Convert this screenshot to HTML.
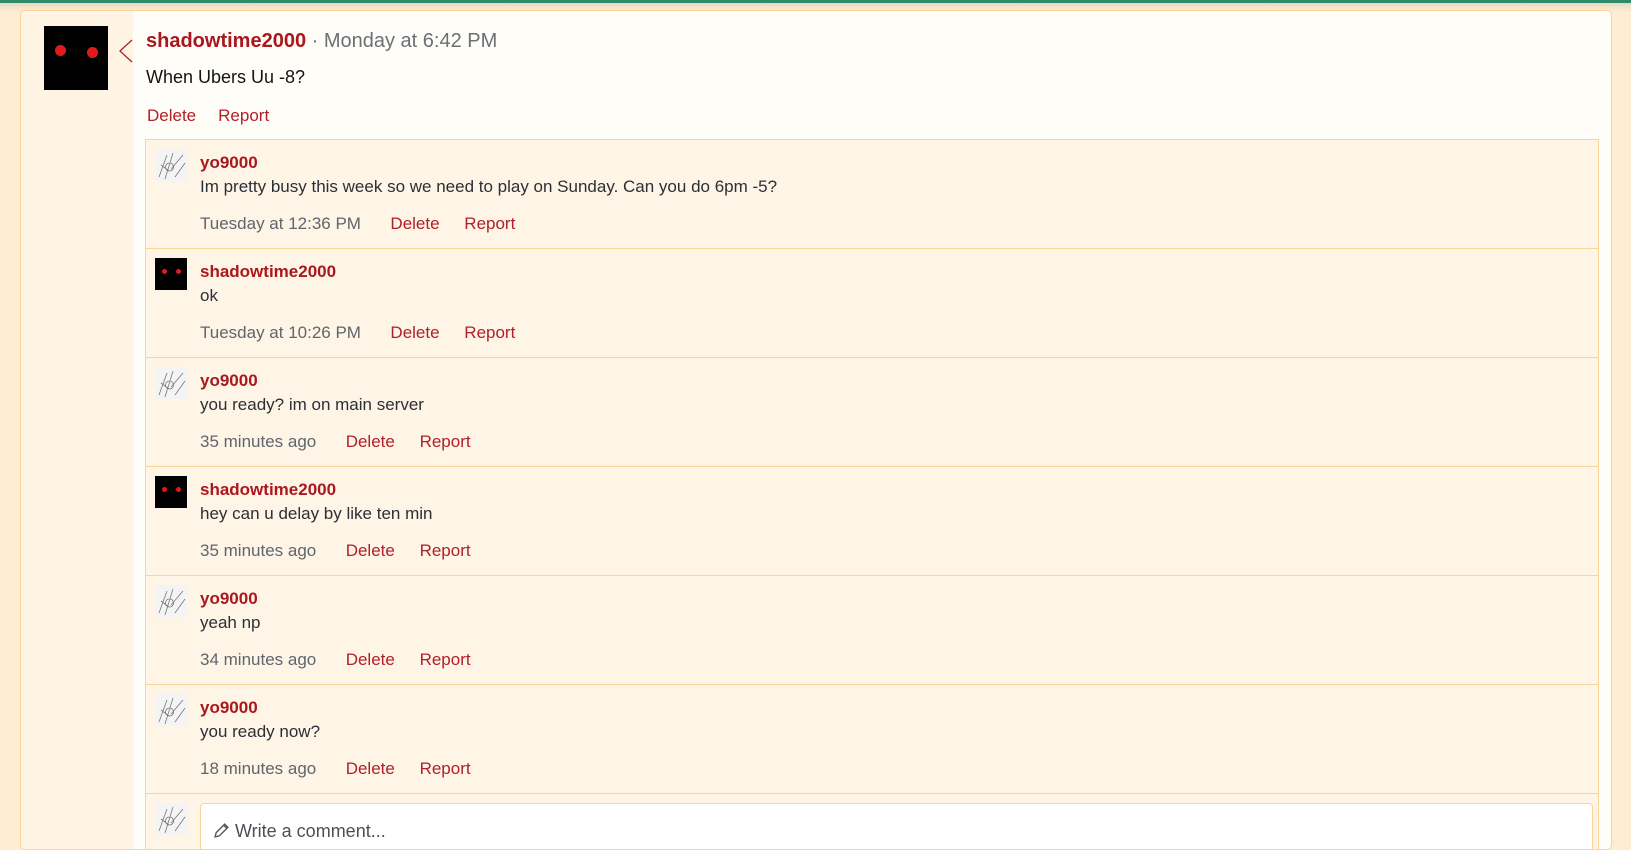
<!DOCTYPE html>
<html><head><meta charset="utf-8"><style>
*{box-sizing:border-box;margin:0;padding:0}
body{width:1631px;height:837px;overflow:hidden;background:#feecd3;font-family:"Liberation Sans",sans-serif;position:relative}
.top{position:absolute;left:0;top:0;width:1631px;height:3px;background:#2f8a6a}
.shade{position:absolute;left:0;top:3px;width:1631px;height:8px;background:linear-gradient(#e8d7c0,#feecd3)}
.card{position:absolute;left:20px;top:10px;width:1592px;height:840px;border:1px solid #fbd49a;border-radius:5px;background:#fffdf8;overflow:hidden}
.left{position:absolute;left:0;top:0;width:112px;height:100%;background:#fff4e4}
.av{position:absolute;left:23px;top:15px;width:64px;height:64px;background:#000}
.eye{position:absolute;width:11px;height:11px;border-radius:50%;background:#e5191c}
.arrow{position:absolute;left:97px;top:28px;width:16px;height:24px}
.name{color:#a8181e;font-weight:bold}
.hd{position:absolute;left:125px;top:19px;font-size:20px}
.hd .t{color:#6b6f76;font-weight:normal}
.msg{position:absolute;left:125px;top:56px;font-size:18px;color:#141414}
.acts{position:absolute;left:126px;top:95px;font-size:17px;color:#b0202a}
.acts span{margin-right:22px}
.box{position:absolute;left:124px;top:128px;width:1454px;height:720px;border:1px solid #fbd49a;background:#fff5e6}
.row{position:absolute;left:0;width:100%;height:109px;border-bottom:1px solid #fbd49a}
.rav{position:absolute;left:9px;top:9px;width:32px;height:32px}
.rn{position:absolute;left:54px;top:13px;font-size:17px}
.rt{position:absolute;left:54px;top:37px;font-size:17px;color:#2b2f36}
.rm{position:absolute;left:54px;top:74px;font-size:17px;color:#5f656e}
.rm span{margin-left:20px;color:#b0202a}
.sk{background:#f4f4f4}
.input{position:absolute;left:54px;top:9px;width:1393px;height:60px;border:1px solid #fbd49a;border-radius:4px;background:#fff;font-size:18px;color:#4b5058;padding:17px 0 0 12px}
</style></head><body>
<div class="top"></div><div class="shade"></div>
<div class="card">
<div class="left"></div>
<div class="av"><div class="eye" style="left:11px;top:19px"></div><div class="eye" style="left:43px;top:21px"></div></div>
<svg class="arrow" viewBox="0 0 16 24"><path d="M14 1 L2 12 L14 23" fill="none" stroke="#b0202a" stroke-width="1.3"/></svg>
<div class="hd"><span class="name">shadowtime2000</span><span class="t"> · Monday at 6:42 PM</span></div>
<div class="msg">When Ubers Uu -8?</div>
<div class="acts"><span>Delete</span><span>Report</span></div>
<div class="box">
<div class="row" style="top:0"><svg class="rav sk" viewBox="0 0 32 32"><path d="M4 28 L12 6 M10 30 L18 4 M16 20 L28 6 M20 28 L30 14 M6 16 L14 22 M14 14 a4 4 0 1 0 1 0" stroke="#777" fill="none" stroke-width=".8"/></svg><div class="rn name">yo9000</div><div class="rt">Im pretty busy this week so we need to play on Sunday. Can you do 6pm -5?</div><div class="rm">Tuesday at 12:36 PM <span>&nbsp;Delete</span><span>&nbsp;Report</span></div></div>
<div class="row" style="top:109px"><div class="rav" style="background:#000"><div class="eye" style="width:5px;height:5px;left:7px;top:11px"></div><div class="eye" style="width:5px;height:5px;left:21px;top:11px"></div></div><div class="rn name">shadowtime2000</div><div class="rt">ok</div><div class="rm">Tuesday at 10:26 PM <span>&nbsp;Delete</span><span>&nbsp;Report</span></div></div>
<div class="row" style="top:218px"><svg class="rav sk" viewBox="0 0 32 32"><path d="M4 28 L12 6 M10 30 L18 4 M16 20 L28 6 M20 28 L30 14 M6 16 L14 22 M14 14 a4 4 0 1 0 1 0" stroke="#777" fill="none" stroke-width=".8"/></svg><div class="rn name">yo9000</div><div class="rt">you ready? im on main server</div><div class="rm">35 minutes ago <span>&nbsp;Delete</span><span>&nbsp;Report</span></div></div>
<div class="row" style="top:327px"><div class="rav" style="background:#000"><div class="eye" style="width:5px;height:5px;left:7px;top:11px"></div><div class="eye" style="width:5px;height:5px;left:21px;top:11px"></div></div><div class="rn name">shadowtime2000</div><div class="rt">hey can u delay by like ten min</div><div class="rm">35 minutes ago <span>&nbsp;Delete</span><span>&nbsp;Report</span></div></div>
<div class="row" style="top:436px"><svg class="rav sk" viewBox="0 0 32 32"><path d="M4 28 L12 6 M10 30 L18 4 M16 20 L28 6 M20 28 L30 14 M6 16 L14 22 M14 14 a4 4 0 1 0 1 0" stroke="#777" fill="none" stroke-width=".8"/></svg><div class="rn name">yo9000</div><div class="rt">yeah np</div><div class="rm">34 minutes ago <span>&nbsp;Delete</span><span>&nbsp;Report</span></div></div>
<div class="row" style="top:545px"><svg class="rav sk" viewBox="0 0 32 32"><path d="M4 28 L12 6 M10 30 L18 4 M16 20 L28 6 M20 28 L30 14 M6 16 L14 22 M14 14 a4 4 0 1 0 1 0" stroke="#777" fill="none" stroke-width=".8"/></svg><div class="rn name">yo9000</div><div class="rt">you ready now?</div><div class="rm">18 minutes ago <span>&nbsp;Delete</span><span>&nbsp;Report</span></div></div>
<div class="row" style="top:654px;border:none"><svg class="rav sk" viewBox="0 0 32 32"><path d="M4 28 L12 6 M10 30 L18 4 M16 20 L28 6 M20 28 L30 14 M6 16 L14 22 M14 14 a4 4 0 1 0 1 0" stroke="#777" fill="none" stroke-width=".8"/></svg><div class="input"><svg width="17" height="17" viewBox="0 0 16 16" style="vertical-align:-2px"><path d="M2 14 L3 10 L11 2 L14 5 L6 13 Z M10 3 L13 6" fill="none" stroke="#555" stroke-width="1.3"/></svg> Write a comment...</div></div>
</div>
</div>
</body></html>
